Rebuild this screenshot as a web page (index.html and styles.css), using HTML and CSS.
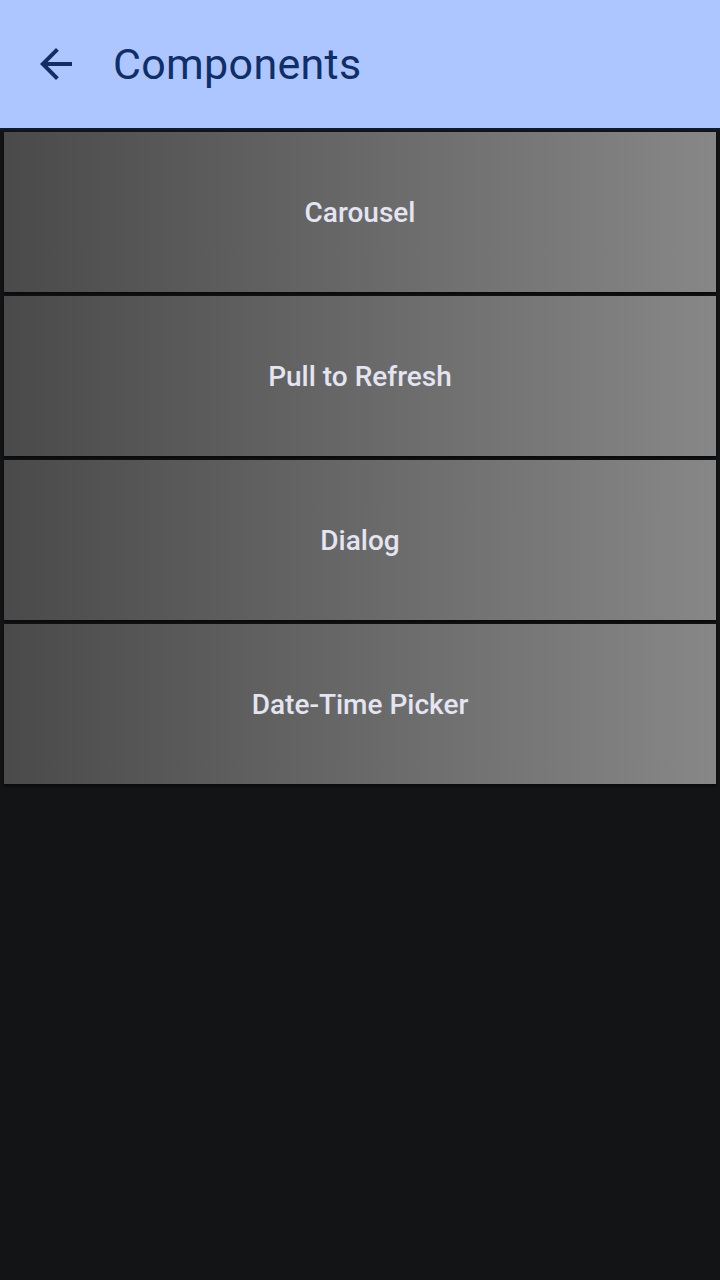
FILE: index.html
```html
<!DOCTYPE html>
<html>
<head>
<meta charset="utf-8">
<link rel="stylesheet" href="styles.css">
</head>
<body>
<div class="app">
  <header class="topbar">
    <button class="back" aria-label="Back">
      <svg viewBox="0 0 24 24" width="48" height="48"><path d="M20 11H7.83l5.59-5.59L12 4l-8 8 8 8 1.41-1.41L7.83 13H20v-2z" fill="currentColor"/></svg>
    </button>
    <h1 class="title">Components</h1>
  </header>
  <main class="list">
    <div class="card">Carousel</div>
    <div class="card">Pull to Refresh</div>
    <div class="card">Dialog</div>
    <div class="card">Date-Time Picker</div>
  </main>
</div>
</body>
</html>
```

FILE: styles.css
```css
html, body {
  margin: 0;
  padding: 0;
  background: #131416;
  font-family: Roboto, "Noto Sans", sans-serif;
}
.app {
  width: 720px;
  height: 1280px;
  display: flex;
  flex-direction: column;
  background: #131416;
}
.topbar {
  height: 128px;
  flex: none;
  background: #adc6ff;
  display: flex;
  align-items: center;
  padding-left: 32px;
  gap: 33px;
  border-bottom: 2px solid #0e1a3a;
}
.back {
  width: 48px;
  height: 48px;
  padding: 0;
  border: 0;
  background: transparent;
  color: #112e66;
  display: flex;
}
.title {
  margin: 0;
  font-size: 43px;
  font-weight: 400;
  color: #112e66;
  letter-spacing: 0.3px;
}
.list {
  display: flex;
  flex-direction: column;
  gap: 4px;
  padding: 2px 4px 0 4px;
}
.card {
  height: 160px;
  display: flex;
  align-items: center;
  justify-content: center;
  background: linear-gradient(to right, #4a4a4a, #878787);
  color: #e4e4f2;
  font-size: 28px;
  font-weight: 500;
  box-shadow: 0 2px 3px rgba(0,0,0,0.6);
}
```
